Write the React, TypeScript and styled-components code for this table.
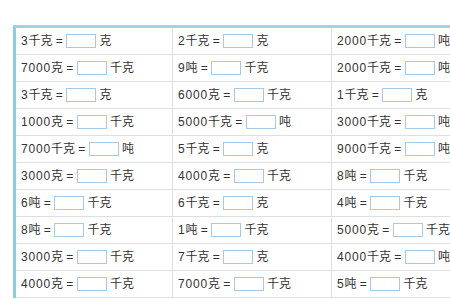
import React from 'react';
import styled, { createGlobalStyle } from 'styled-components';

const GlobalStyle = createGlobalStyle`
  html, body {
    margin: 0;
    padding: 0;
    background: #fff;
    overflow: hidden;
  }
`;

const Page = styled.div`
  padding: 25px 0 0 13px;
  width: 600px;
`;

const Sheet = styled.div`
  display: grid;
  grid-template-columns: 157px 159px 170px;
  border-top: 3px solid #9ad7e2;
  border-left: 3px solid #8ccde6;
`;

const Cell = styled.div`
  height: 26px;
  line-height: 26px;
  padding-left: 5px;
  border-right: 1px solid #dedede;
  border-bottom: 1px solid #dedede;
  font-family: "Liberation Sans", "Noto Sans CJK SC", sans-serif;
  font-size: 12px;
  color: #333;
  white-space: nowrap;
  overflow: hidden;
`;

const Num = styled.span`
  letter-spacing: 0.8px;
`;

const Blank = styled.span`
  display: inline-block;
  width: 30px;
  height: 14px;
  box-sizing: border-box;
  border: 1px solid #a7c8e6;
  background: #fff;
  vertical-align: middle;
  margin-top: -2px;
`;

type Item = [string, string, string];

const rows: Item[][] = [
  [['3', '千克', '克'], ['2', '千克', '克'], ['2000', '千克', '吨']],
  [['7000', '克', '千克'], ['9', '吨', '千克'], ['2000', '千克', '吨']],
  [['3', '千克', '克'], ['6000', '克', '千克'], ['1', '千克', '克']],
  [['1000', '克', '千克'], ['5000', '千克', '吨'], ['3000', '千克', '吨']],
  [['7000', '千克', '吨'], ['5', '千克', '克'], ['9000', '千克', '吨']],
  [['3000', '克', '千克'], ['4000', '克', '千克'], ['8', '吨', '千克']],
  [['6', '吨', '千克'], ['6', '千克', '克'], ['4', '吨', '千克']],
  [['8', '吨', '千克'], ['1', '吨', '千克'], ['5000', '克', '千克']],
  [['3000', '克', '千克'], ['7', '千克', '克'], ['4000', '千克', '吨']],
  [['4000', '克', '千克'], ['7000', '克', '千克'], ['5', '吨', '千克']],
];

const App = () => {
  return (
    <Page>
      <GlobalStyle />
      <Sheet>
        {rows.map((row, i) =>
          row.map(([amount, from, to], j) => (
            <Cell key={`${i}-${j}`}>
              <Num>{amount}</Num>{from} = <Blank /> {to}
            </Cell>
          ))
        )}
      </Sheet>
    </Page>
  );
};

export default App;
